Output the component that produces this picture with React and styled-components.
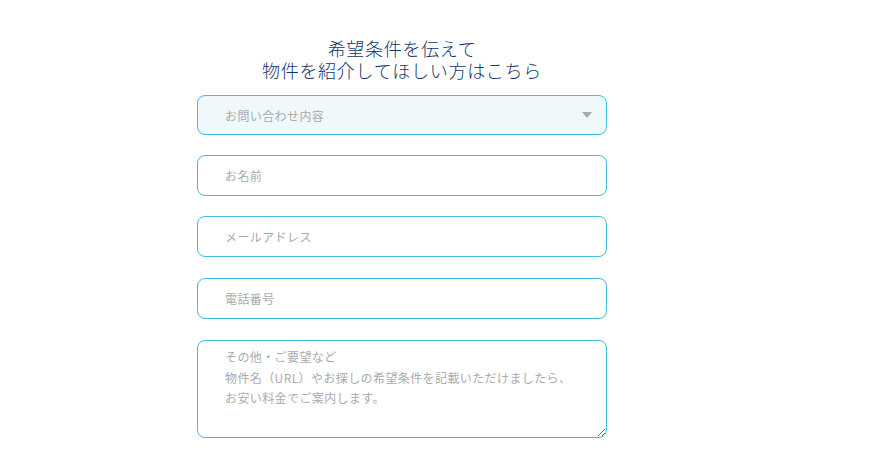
import React from "react";
import styled, { createGlobalStyle } from "styled-components";

const Global = createGlobalStyle`
  html, body { margin: 0; padding: 0; background: #fff; }
  body { font-family: "Noto Sans CJK JP", "Noto Sans", sans-serif; }
  * { box-sizing: border-box; }
`;

const Page = styled.div`
  width: 871px;
  height: 472px;
  padding: 37px 0 0 197px;
`;

const Form = styled.form`
  width: 410px;
  display: flex;
  flex-direction: column;
`;

const Title = styled.h2`
  margin: 0 0 14px;
  font-size: 18px;
  line-height: 22px;
  font-weight: 300;
  letter-spacing: 0.7px;
  color: #12356c;
  text-align: center;
`;

const Row = styled.div`
  position: relative;
  margin-bottom: ${(p) => p.$mb || 0}px;
`;

const fieldBase = `
  display: block;
  width: 100%;
  border: 1px solid #3fbde0;
  border-radius: 8px;
  font-family: "Noto Sans CJK JP", "Noto Sans", sans-serif;
  font-size: 12px;
  letter-spacing: 0.4px;
  color: #555;
  outline: none;
  padding: 0 27px;
  &::placeholder { color: #a9abad; }
`;

const Select = styled.select`
  ${fieldBase}
  height: 40px;
  background: #eff8fb;
  color: #a9abad;
  appearance: none;
  -webkit-appearance: none;
`;

const Caret = styled.span`
  position: absolute;
  right: 15px;
  top: 17px;
  width: 0;
  height: 0;
  border-left: 5px solid transparent;
  border-right: 5px solid transparent;
  border-top: 6px solid #a6a8aa;
  pointer-events: none;
`;

const Input = styled.input`
  ${fieldBase}
  height: 41px;
  background: #fff;
`;

const TextArea = styled.textarea`
  ${fieldBase}
  height: 98px;
  padding-top: 6px;
  line-height: 20.5px;
  background: #fff;
  resize: both;
`;

export default function App() {
  return (
    <Page>
      <Global />
      <Form>
        <Title>
          希望条件を伝えて
          <br />
          物件を紹介してほしい方はこちら
        </Title>
        <Row $mb={20}>
          <Select defaultValue="">
            <option value="" disabled>
              お問い合わせ内容
            </option>
          </Select>
          <Caret />
        </Row>
        <Row $mb={20}>
          <Input placeholder="お名前" />
        </Row>
        <Row $mb={21}>
          <Input placeholder="メールアドレス" />
        </Row>
        <Row $mb={21}>
          <Input placeholder="電話番号" />
        </Row>
        <Row>
          <TextArea
            placeholder={
              "その他・ご要望など\n物件名（URL）やお探しの希望条件を記載いただけましたら、\nお安い料金でご案内します。"
            }
          />
        </Row>
      </Form>
    </Page>
  );
}
